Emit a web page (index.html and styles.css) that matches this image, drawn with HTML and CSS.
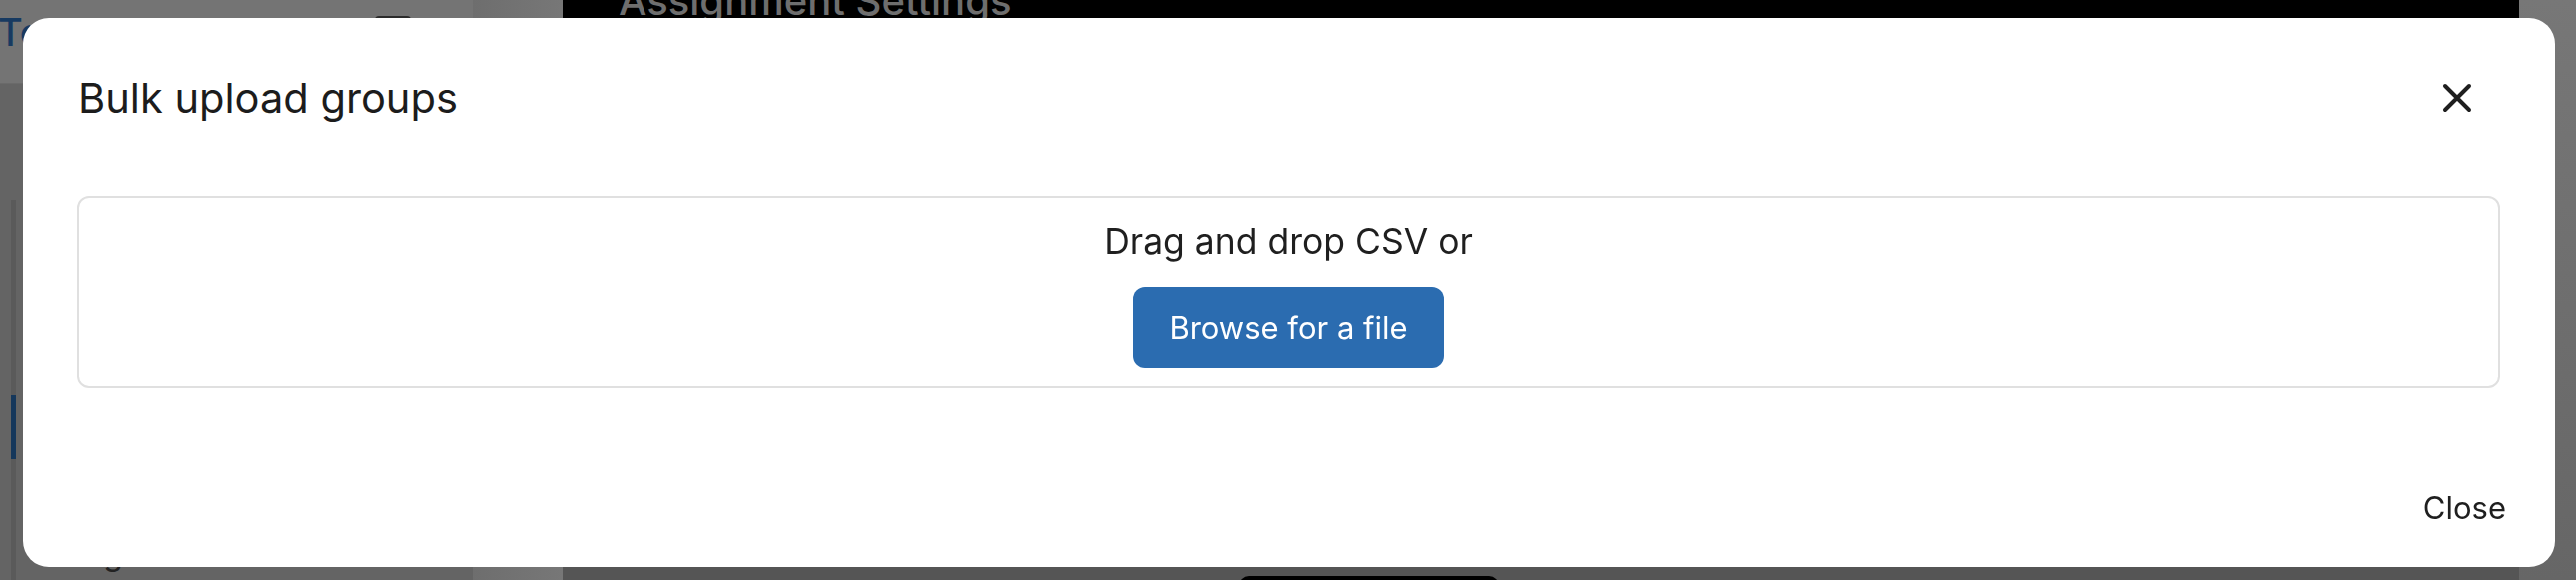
FILE: index.html
```html
<!DOCTYPE html>
<html lang="en">
<head>
<meta charset="utf-8">
<title>Bulk upload groups</title>
<link rel="stylesheet" href="styles.css">
</head>
<body>
<div class="page">
  <aside class="sidebar">
    <div class="side-head">
      <span class="side-title">Today</span>
      <span class="side-icon"></span>
    </div>
    <div class="side-body">
      <div class="rail"><div class="rail-active"></div></div>
      <div class="side-nav">
        <span class="side-item">Tags</span>
      </div>
    </div>
  </aside>
  <div class="gutter"></div>
  <main class="main">
    <header class="main-head">Assignment Settings</header>
    <div class="main-body">
      <span class="main-pill"></span>
    </div>
  </main>
  <div class="right-strip"></div>
</div>

<div class="overlay">
  <div class="modal" role="dialog" aria-labelledby="modal-title">
    <div class="modal-header">
      <h2 class="modal-title" id="modal-title">Bulk upload groups</h2>
      <button class="icon-btn" aria-label="Close">
        <svg width="30" height="30" viewBox="0 0 30 30" aria-hidden="true">
          <path d="M3 3 L27 27 M27 3 L3 27" stroke="#1f1f1f" stroke-width="4" stroke-linecap="round" fill="none"/>
        </svg>
      </button>
    </div>
    <div class="modal-body">
      <div class="dropzone">
        <p class="drop-text">Drag and drop CSV or</p>
        <button class="browse-btn">Browse for a file</button>
      </div>
    </div>
    <div class="modal-footer">
      <button class="text-btn">Close</button>
    </div>
  </div>
</div>
</body>
</html>
```

FILE: styles.css
```css
* { box-sizing: border-box; }

html, body {
  margin: 0;
  padding: 0;
  width: 2578px;
  height: 580px;
  overflow: hidden;
  font-family: Inter, "Noto Sans", sans-serif;
}

/* background page (already dimmed by backdrop) */
.page {
  display: flex;
  width: 2578px;
  height: 580px;
}

.sidebar {
  width: 473px;
  flex: none;
  display: flex;
  flex-direction: column;
  background: #646464;
}

.side-head {
  height: 84px;
  flex: none;
  background: #747474;
  border-bottom: 1px solid #6a6a6a;
  display: flex;
  align-items: flex-start;
  justify-content: space-between;
  padding: 8px 62px 0 0;
}

.side-title {
  font-size: 38px;
  line-height: 48px;
  font-weight: 500;
  color: #173a61;
  margin-left: -2px;
}

.side-icon {
  width: 36px;
  height: 36px;
  margin-top: 8px;
  background: #2b2b2b;
  border-radius: 4px;
}

.side-body {
  flex: 1;
  display: flex;
  padding-top: 116px;
}

.rail {
  width: 5px;
  margin-left: 11px;
  background: #5a5a5a;
  padding-top: 195px;
  flex: none;
}

.rail-active {
  height: 64px;
  background: #15375b;
}

.side-nav {
  display: flex;
  flex-direction: column;
  justify-content: flex-end;
  padding: 0 0 6px 51px;
}

.side-item {
  font-size: 32px;
  line-height: 40px;
  color: #222;
}

.gutter {
  width: 90px;
  flex: none;
  background: linear-gradient(90deg, #6e6e6e 0%, #777 100%);
}

.main {
  width: 1958px;
  flex: none;
  display: flex;
  flex-direction: column;
  background: #555;
}

.main-head {
  height: 90px;
  flex: none;
  background: #000;
  color: #6e6e6e;
  font-size: 40px;
  line-height: 48px;
  font-weight: 500;
  padding-left: 56px;
  margin-top: -23px;
}

.main-body {
  flex: 1;
  display: flex;
  align-items: flex-end;
  padding-left: 677px;
}

.main-pill {
  width: 260px;
  height: 14px;
  margin-bottom: -10px;
  background: #000;
  border-radius: 10px 10px 0 0;
}

.right-strip {
  flex: 1;
  background: linear-gradient(180deg, #777 0%, #666 100%);
}

/* modal */
.overlay {
  position: fixed;
  inset: 0;
  display: flex;
  padding: 18px 21px 13px 23px;
}

.modal {
  flex: 1;
  background: #fff;
  border-radius: 26px;
  display: flex;
  flex-direction: column;
}

.modal-header {
  display: flex;
  align-items: center;
  justify-content: space-between;
  padding: 56px 83px 0 55px;
}

.modal-title {
  margin: 0;
  font-size: 41.6px;
  line-height: 48px;
  font-weight: 400;
  color: #1c1c1c;
}

.icon-btn {
  display: flex;
  padding: 0;
  border: 0;
  background: none;
  cursor: pointer;
}

.modal-body {
  padding: 74px 55px 0 54px;
}

.dropzone {
  height: 192px;
  border: 2px solid #e0e0e0;
  border-radius: 12px;
  display: flex;
  flex-direction: column;
  align-items: center;
  padding-top: 22px;
}

.drop-text {
  margin: 0;
  font-size: 35.5px;
  line-height: 44px;
  color: #1f1f1f;
}

.browse-btn {
  margin-top: 23px;
  height: 81px;
  padding: 0 36px;
  border: 0;
  border-radius: 12px;
  background: #2b6cb0;
  color: #fff;
  font-family: Inter, "Noto Sans", sans-serif;
  font-size: 31px;
  line-height: 48px;
}

.modal-footer {
  margin-top: auto;
  display: flex;
  justify-content: flex-end;
  padding: 0 49px 39px 0;
}

.text-btn {
  border: 0;
  background: none;
  padding: 0;
  font-family: Inter, "Noto Sans", sans-serif;
  font-size: 31px;
  line-height: 40px;
  color: #1f1f1f;
}
```
